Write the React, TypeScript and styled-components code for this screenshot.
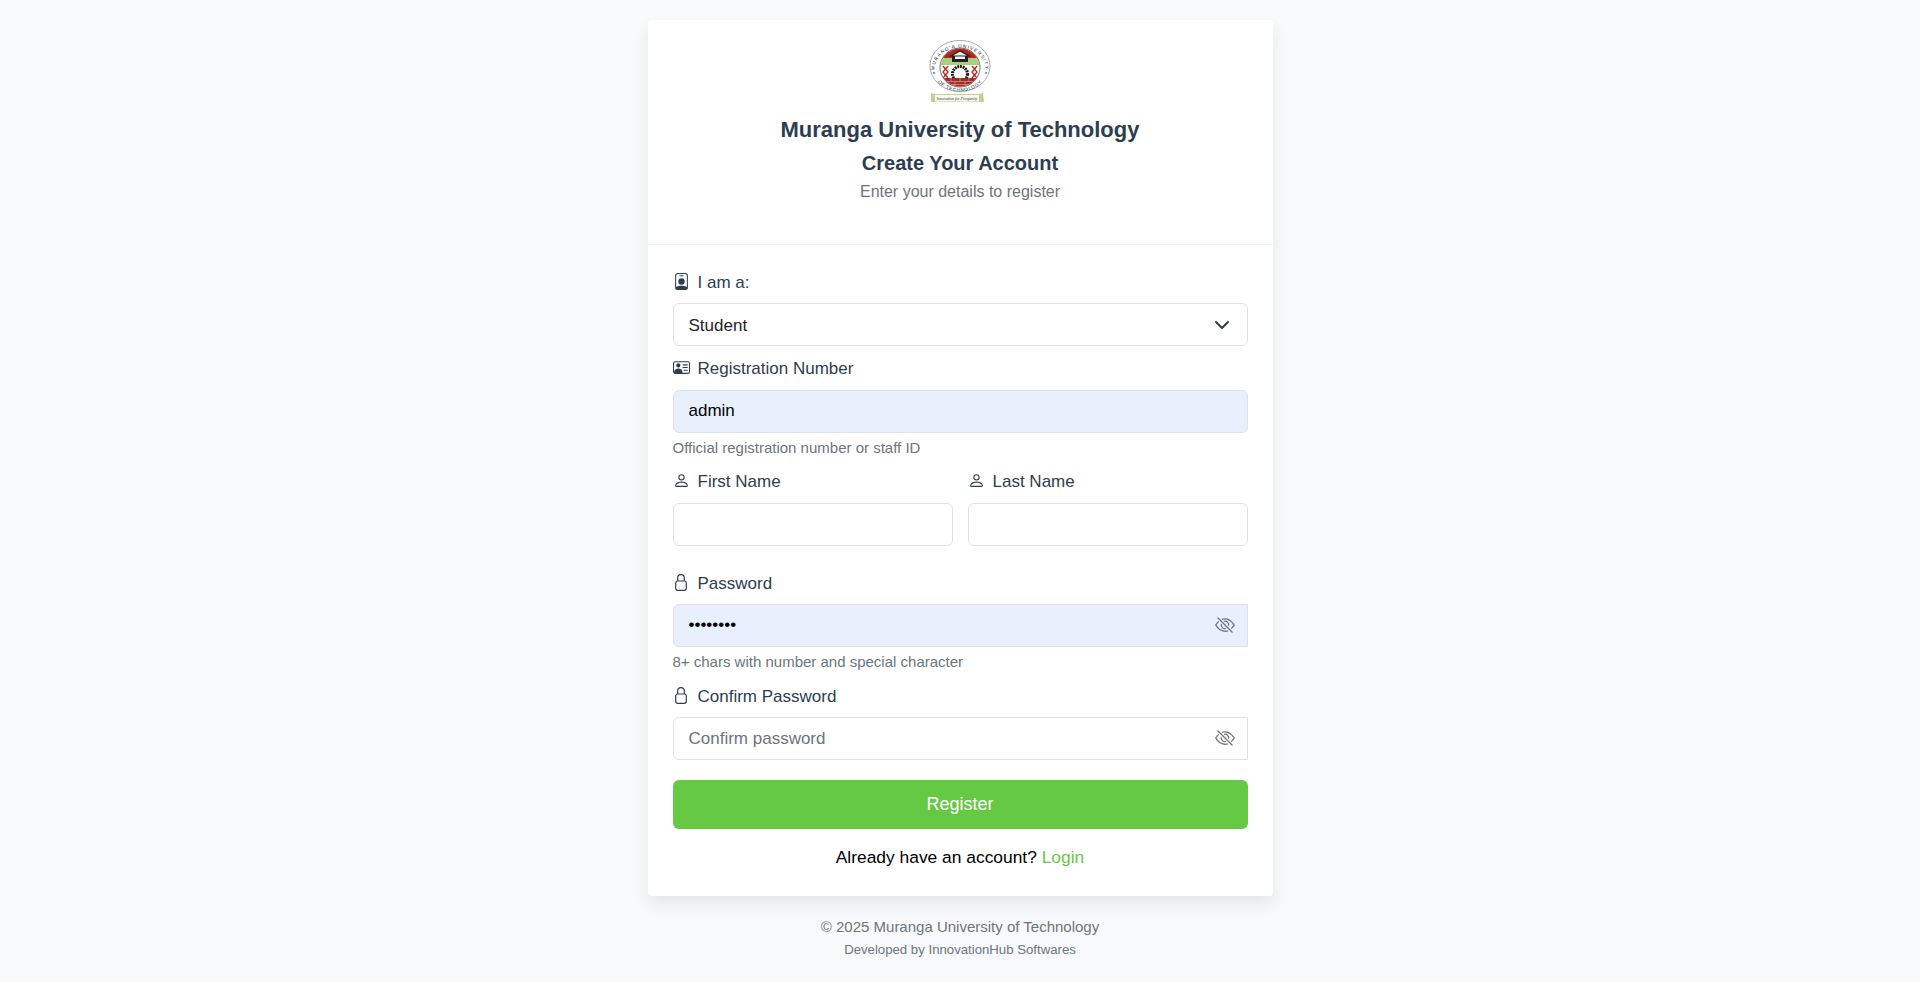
import styled, { createGlobalStyle } from "styled-components";
import { BsEyeSlash, BsPerson, BsPersonBadge, BsPersonVcard } from "react-icons/bs";

const GlobalStyle = createGlobalStyle`
  * {
    box-sizing: border-box;
  }

  html,
  body {
    margin: 0;
    padding: 0;
    background: #f8f9fa;
    font-family: "Liberation Sans", Arial, sans-serif;
    color: #212529;
  }
`;

function Logo() {
  return (
    <LogoSvg viewBox="0 0 62 62" aria-label="Muranga University of Technology logo">
      <defs>
        <path id="ring-top" d="M5.500 30 A25.500 22.500 0 0 1 56.500 30" />
        <path id="ring-bottom" d="M3 27 A28 24.500 0 0 0 59 27" />
        <clipPath id="crest">
          <ellipse cx="31" cy="27.500" rx="19.500" ry="19" />
        </clipPath>
      </defs>
      <ellipse cx="31" cy="26" rx="30" ry="25.600" fill="#fff" stroke="#555" strokeWidth="0.5" />
      <ellipse cx="31" cy="27.500" rx="20" ry="19.500" fill="#fff" stroke="#333" strokeWidth="0.7" />
      <text fontSize="4.700" fontFamily="Liberation Sans, sans-serif" fill="#222" letterSpacing="1.100">
        <textPath href="#ring-top" startOffset="50%" textAnchor="middle">
          MURANG'A UNIVERSITY
        </textPath>
      </text>
      <text fontSize="4.700" fontFamily="Liberation Sans, sans-serif" fill="#222" letterSpacing="0.700">
        <textPath href="#ring-bottom" startOffset="50%" textAnchor="middle">
          OF TECHNOLOGY
        </textPath>
      </text>
      <circle cx="5" cy="33" r="1" fill="#2a8fc4" />
      <circle cx="57" cy="33" r="1" fill="#2a8fc4" />
      <g clipPath="url(#crest)">
        <rect x="10" y="6" width="42" height="12" fill="#b3261e" />
        <rect x="10" y="18" width="42" height="7" fill="#a9cf7f" />
        <path d="M22 16 L31 11 L40 16 Z" fill="#fff" stroke="#222" strokeWidth="1.200" />
        <rect x="23" y="16" width="16" height="6" fill="#222" />
        <rect x="26" y="16.500" width="10" height="2.500" fill="#fff" />
        <path d="M14 26 L19 32 L14 38 M19 26 L14 32 L19 38" fill="none" stroke="#b3261e" strokeWidth="1.300" />
        <path d="M43 26 L48 32 L43 38 M48 26 L43 32 L48 38" fill="none" stroke="#b3261e" strokeWidth="1.300" />
        <circle cx="31" cy="34" r="7.500" fill="none" stroke="#1a1a1a" strokeWidth="3" strokeDasharray="1.900 0.800" />
        <rect x="10" y="38" width="42" height="10" fill="#a32a20" />
        <path d="M10 41.500 H52 M10 44.500 H52 M22 38 V41.500 M31 38 V41.500 M40 38 V41.500 M26 41.500 V44.500 M36 41.500 V44.500" stroke="#e8cfc9" strokeWidth="0.500" fill="none" />
      </g>
      <path d="M2 53 L6 54 H50 L54 53 L55 62 H2 Z" fill="#bcd48d" />
      <rect x="6" y="55" width="44" height="6.500" fill="#f7f8ef" />
      <text x="28" y="60" fontSize="4" fontFamily="Liberation Serif, serif" fontStyle="italic" fill="#333" textAnchor="middle">
        Innovation for Prosperity
      </text>
    </LogoSvg>
  );
}

function Chevron() {
  return (
    <ChevronSvg viewBox="0 0 16 16" aria-hidden="true">
      <path d="m2 5 6 6 6-6" fill="none" stroke="#343a40" strokeWidth="2" strokeLinecap="round" strokeLinejoin="round" />
    </ChevronSvg>
  );
}

function LockIcon() {
  return (
    <LockSvg viewBox="0 0 12 17" aria-hidden="true">
      <rect x="0.700" y="7" width="10.600" height="9.300" rx="2" fill="none" stroke="currentColor" strokeWidth="1.200" />
      <path d="M2.700 7 V4 a3.300 3.300 0 0 1 6.600 0 V7" fill="none" stroke="currentColor" strokeWidth="1.200" />
    </LockSvg>
  );
}

export default function App() {
  return (
    <Page>
      <GlobalStyle />
      <Card>
        <CardHeader>
          <Logo />
          <University>Muranga University of Technology</University>
          <Heading>Create Your Account</Heading>
          <Subheading>Enter your details to register</Subheading>
        </CardHeader>

        <Form onSubmit={(e) => e.preventDefault()}>
          <Label htmlFor="role">
            <LabelIcon><BsPersonBadge /></LabelIcon>
            I am a:
          </Label>
          <SelectBox id="role">
            Student
            <Chevron />
          </SelectBox>

          <Label htmlFor="reg" $top={11}>
            <LabelIcon><BsPersonVcard /></LabelIcon>
            Registration Number
          </Label>
          <Input id="reg" $autofill defaultValue="admin" />
          <Hint>Official registration number or staff ID</Hint>

          <NameRow>
            <div>
              <Label htmlFor="first">
                <LabelIcon><BsPerson /></LabelIcon>
                First Name
              </Label>
              <Input id="first" />
            </div>
            <div>
              <Label htmlFor="last">
                <LabelIcon><BsPerson /></LabelIcon>
                Last Name
              </Label>
              <Input id="last" />
            </div>
          </NameRow>

          <Label htmlFor="password" $top={26} $bottom={8}>
            <LabelIcon><LockIcon /></LabelIcon>
            Password
          </Label>
          <PasswordWrap>
            <PasswordInput id="password" type="password" $autofill defaultValue="password" />
            <EyeButton type="button" aria-label="Show password"><BsEyeSlash /></EyeButton>
          </PasswordWrap>
          <Hint>8+ chars with number and special character</Hint>

          <Label htmlFor="confirm" $top={14} $bottom={8}>
            <LabelIcon><LockIcon /></LabelIcon>
            Confirm Password
          </Label>
          <PasswordWrap>
            <PasswordInput id="confirm" type="password" placeholder="Confirm password" />
            <EyeButton type="button" aria-label="Show password"><BsEyeSlash /></EyeButton>
          </PasswordWrap>

          <RegisterButton type="submit">Register</RegisterButton>

          <LoginLine>
            Already have an account? <LoginLink href="#login">Login</LoginLink>
          </LoginLine>
        </Form>
      </Card>

      <Footer>
        <Copyright>© 2025 Muranga University of Technology</Copyright>
        <Credit>Developed by InnovationHub Softwares</Credit>
      </Footer>
    </Page>
  );
}

/* ---------------- Styled Components ---------------- */

const Page = styled.div`
  min-height: 982px;
  padding-top: 20px;
  display: flex;
  flex-direction: column;
  align-items: center;
  background: #f8f9fa;
`;

const Card = styled.div`
  width: 625px;
  background: #fff;
  border-radius: 4px;
  box-shadow: 0 8px 16px rgba(0, 0, 0, 0.08);
`;

const CardHeader = styled.div`
  height: 225px;
  padding-top: 20px;
  display: flex;
  flex-direction: column;
  align-items: center;
  border-bottom: 1px solid #f1f2f4;
`;

const LogoSvg = styled.svg`
  width: 62px;
  height: 62px;
  display: block;
`;

const University = styled.h1`
  margin: 14px 0 0;
  font-size: 22px;
  line-height: 28px;
  font-weight: 700;
  color: #2c3e50;
`;

const Heading = styled.h2`
  margin: 6px 0 0;
  font-size: 20px;
  line-height: 26px;
  font-weight: 700;
  color: #2c3e50;
`;

const Subheading = styled.p`
  margin: 4px 0 0;
  font-size: 16px;
  line-height: 24px;
  color: #6c757d;
`;

const Form = styled.form`
  padding: 26px 25px 27px;
`;

const Label = styled.label<{ $top?: number; $bottom?: number }>`
  display: flex;
  align-items: center;
  gap: 8px;
  height: 24px;
  margin-top: ${(p) => p.$top ?? 0}px;
  margin-bottom: ${(p) => p.$bottom ?? 9}px;
  font-size: 17px;
  color: #2c3e50;
`;

const LabelIcon = styled.span`
  width: 17px;
  padding-bottom: 3px;
  display: inline-flex;
  justify-content: center;
  color: #2c3e50;
  font-size: 17px;
`;

const LockSvg = styled.svg`
  width: 12px;
  height: 17px;
`;

const SelectBox = styled.div`
  height: 43px;
  margin-top: -1px;
  padding: 2px 17px 0 15px;
  display: flex;
  align-items: center;
  justify-content: space-between;
  border: 1.5px solid #dee2e6;
  border-radius: 6px;
  font-size: 17px;
  color: #212529;
`;

const ChevronSvg = styled.svg`
  width: 16px;
  height: 16px;
  margin-top: -2px;
`;

const Input = styled.input<{ $autofill?: boolean }>`
  width: 100%;
  height: 43px;
  padding: 0 15px ${(p) => (p.$autofill ? 2 : 0)}px;
  display: block;
  border: 1.5px solid #dee2e6;
  border-radius: 6px;
  outline: none;
  background: ${(p) => (p.$autofill ? "#e8f0fe" : "#fff")};
  font-family: inherit;
  font-size: 17px;
  color: #000;

  &::placeholder {
    color: #6c757d;
    opacity: 1;
  }
`;

const Hint = styled.div`
  margin-top: 6px;
  font-size: 15px;
  line-height: 18px;
  color: #6c757d;
`;

const NameRow = styled.div`
  margin-top: 13px;
  display: grid;
  grid-template-columns: 1fr 1fr;
  gap: 15px;
`;

const PasswordWrap = styled.div`
  position: relative;
`;

const PasswordInput = styled(Input)`
  border-radius: 6px 0 0 6px;
`;

const EyeButton = styled.button`
  position: absolute;
  top: calc(50% - 1px);
  right: 13px;
  transform: translateY(-50%);
  padding: 0;
  display: flex;
  border: none;
  background: none;
  color: #6c757d;
  font-size: 20px;
`;

const RegisterButton = styled.button`
  width: 100%;
  height: 49px;
  margin-top: 20px;
  border: none;
  border-radius: 6px;
  background: #66c944;
  color: #fff;
  font-family: inherit;
  font-size: 18px;
`;

const LoginLine = styled.div`
  margin-top: 16px;
  text-align: center;
  font-size: 17.400px;
  line-height: 24px;
  color: #000;
`;

const LoginLink = styled.a`
  color: #66c944;
  text-decoration: none;
`;

const Footer = styled.footer`
  margin-top: 21px;
  text-align: center;
  color: #6c757d;
`;

const Copyright = styled.div`
  font-size: 15px;
  line-height: 20px;
`;

const Credit = styled.div`
  margin-top: 4px;
  font-size: 13.200px;
  line-height: 18px;
`;
